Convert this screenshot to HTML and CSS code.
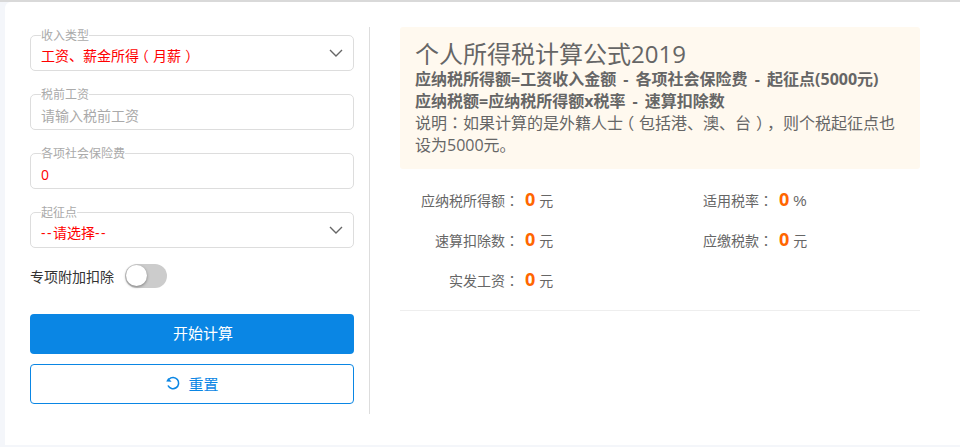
FILE: index.html
```html
<!DOCTYPE html>
<html lang="zh">
<head>
<meta charset="utf-8">
<title>个人所得税计算</title>
<link rel="stylesheet" href="styles.css">
</head>
<body>
<main class="card">
  <form class="form">
    <div class="field">
      <span class="legend">收入类型</span>
      <span class="value red">工资、薪金所得<span class="lp">（</span>月薪<span class="rp">）</span></span>
      <svg class="chev" width="14" height="8" viewBox="0 0 14 8"><path d="M1 1l6 6 6-6" fill="none" stroke="#666" stroke-width="1.4"/></svg>
    </div>
    <div class="field">
      <span class="legend">税前工资</span>
      <span class="value input ph">请输入税前工资</span>
    </div>
    <div class="field">
      <span class="legend">各项社会保险费</span>
      <span class="value input red">0</span>
    </div>
    <div class="field">
      <span class="legend">起征点</span>
      <span class="value red"><span class="dash">--</span>请选择<span class="dash">--</span></span>
      <svg class="chev" width="14" height="8" viewBox="0 0 14 8"><path d="M1 1l6 6 6-6" fill="none" stroke="#666" stroke-width="1.4"/></svg>
    </div>
    <div class="switch-row">
      <span>专项附加扣除</span>
      <span class="switch"><span class="knob"></span></span>
    </div>
    <div class="btn primary">开始计算</div>
    <div class="btn outline">
      <svg width="16" height="16" viewBox="0 0 16 16"><path d="M4 4.2A5.6 5.6 0 1 1 3 10.5" fill="none" stroke="#0a86e4" stroke-width="1.6"/><path d="M1.2 6.6L6.6 6.8 3.3 3z" fill="#0a86e4"/></svg>
      <span>重置</span>
    </div>
  </form>
  <section class="result">
    <div class="notice">
      <h1>个人所得税计算公式2019</h1>
      <p class="b">应纳税所得额=工资收入金额 - 各项社会保险费 - 起征点(5000元)</p>
      <p class="b">应纳税额=应纳税所得额x税率 - 速算扣除数</p>
      <p>说明<span class="cp" lang="zh-TW">：</span>如果计算的是外籍人士<span class="lp">（</span>包括港、澳、台<span class="rp">）</span>，则个税起征点也设为5000元。</p>
    </div>
    <div class="stats">
      <div class="stat"><span class="k">应纳税所得额<span class="cp" lang="zh-TW">：</span></span><b>0</b><span>元</span></div>
      <div class="stat"><span class="k">适用税率<span class="cp" lang="zh-TW">：</span></span><b>0</b><span class="pct">%</span></div>
      <div class="stat"><span class="k">速算扣除数<span class="cp" lang="zh-TW">：</span></span><b>0</b><span>元</span></div>
      <div class="stat"><span class="k">应缴税款<span class="cp" lang="zh-TW">：</span></span><b>0</b><span>元</span></div>
      <div class="stat"><span class="k">实发工资<span class="cp" lang="zh-TW">：</span></span><b>0</b><span>元</span></div>
    </div>
  </section>
</main>
</body>
</html>
```
FILE: styles.css
```css
* { box-sizing: border-box; }
html, body { height: 100%; }
body {
  margin: 0;
  height: 447px;
  overflow: hidden;
  padding: 2px 0 2px 5px;
  background: #f4f6fa;
  font-family: "Open Sans", "Noto Sans CJK SC", sans-serif;
  text-spacing-trim: space-all;
  color: #666;
  position: relative;
}
body::before {
  content: "";
  position: absolute;
  left: 0; right: 0; top: 0;
  height: 2px;
  background: #d9d9d9;
}
.cp { font-family: "Noto Sans CJK TC", sans-serif; line-height: 1; }
.lp { margin-left: -.3em; margin-right: .3em; }
.rp { margin-left: .3em; margin-right: -.3em; }
.dash { letter-spacing: 1.5px; }
.card {
  height: 443px;
  background: #fff;
  border-top-left-radius: 6px;
  padding: 25px 40px 0 25px;
  display: flex;
  align-items: flex-start;
}
.form {
  width: 340px;
  height: 387px;
  padding: 8px 15px 0 0;
  border-right: 1px solid #ddd;
  margin-right: 30px;
  flex: none;
}
.field {
  position: relative;
  width: 324px;
  height: 36px;
  margin-bottom: 23px;
  border: 1px solid #ddd;
  border-radius: 5px;
  padding: 0 10px;
  display: flex;
  align-items: center;
  justify-content: space-between;
  font-size: 14px;
}
.legend {
  position: absolute;
  left: 10px;
  top: -6px;
  font-size: 12px;
  line-height: 12px;
  color: #aaa;
  background: #fff;
}
.value { position: relative; top: 2px; white-space: nowrap; flex: none; }
.input { top: 3px; }
.red { color: #f00; }
.ph { color: #aaa; }
.chev { position: relative; top: 0; }
.switch-row {
  display: flex;
  align-items: center;
  gap: 11px;
  height: 24px;
  margin: -7px 0 26px;
  font-size: 14px;
  color: #333;
}
.switch {
  width: 42px;
  height: 24px;
  border-radius: 12px;
  background: #ccc;
  padding: 1px;
}
.knob {
  display: block;
  width: 21px;
  height: 21px;
  border-radius: 50%;
  background: #fff;
  box-shadow: 0 1px 3px rgba(0,0,0,.4);
}
.btn {
  width: 324px;
  height: 40px;
  border-radius: 4px;
  display: flex;
  align-items: center;
  justify-content: center;
  gap: 7px;
  font-size: 15px;
  margin-bottom: 10px;
  padding-bottom: 2px;
}
.primary { background: #0a86e4; color: #fff; padding-left: 22px; padding-bottom: 3px; }
.outline { border: 1px solid #0a86e4; color: #0a86e4; }
.result { width: 520px; flex: none; }
.notice {
  background: #fff9ef;
  border-radius: 3px;
  height: 142px;
  padding: 12px 15px;
  font-size: 16px;
  line-height: 22px;
}
.notice h1 { margin: 0; font-size: 24px; font-weight: 400; line-height: 29px; }
.notice p { margin: 0; }
.notice .b { font-weight: 700; word-spacing: 3px; }
.stats {
  display: grid;
  grid-template-columns: 254px 254px;
  grid-auto-rows: 40px;
  padding: 11px 0 10px;
  border-bottom: 1px solid #eee;
  font-size: 14px;
}
.stat { display: flex; align-items: center; }
.k { width: 119px; text-align: right; font-size: 14px; margin-right: 6px; }
.stat b { font-size: 18px; line-height: 20px; color: #f60; margin: 0 4px 3px 0; }
.pct { font-family: "Liberation Sans", sans-serif; font-size: 15px; }
```
